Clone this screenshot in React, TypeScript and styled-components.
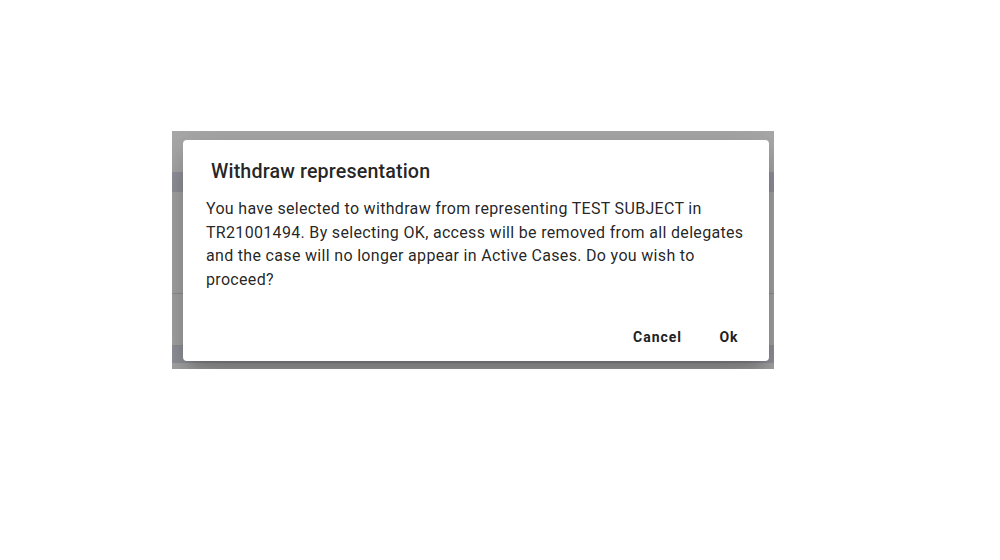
import React from "react";
import styled, { createGlobalStyle } from "styled-components";

const GlobalStyle = createGlobalStyle`
  html, body {
    margin: 0;
    padding: 0;
    background: #ffffff;
    font-family: Roboto, "Noto Sans", "Liberation Sans", sans-serif;
  }
`;

const Page = styled.div`
  padding: 131px 0 0 172px;
`;

const Region = styled.div`
  position: relative;
  width: 602px;
  height: 238px;
  overflow: hidden;
  background: #ffffff;
`;

const Underlay = styled.div`
  display: flex;
  flex-direction: column;
  padding-top: 41px;
`;

const HeaderBand = styled.div<{ $h: number }>`
  height: ${(p) => p.$h}px;
  background: #e2e2f0;
`;

const Row = styled.div<{ $h: number }>`
  height: ${(p) => p.$h}px;
  border-bottom: 1px solid #e0e0e0;
  box-sizing: border-box;
`;

const Backdrop = styled.div`
  position: absolute;
  inset: 0;
  background: rgba(0, 0, 0, 0.33);
  display: flex;
  align-items: flex-start;
  justify-content: flex-start;
  padding: 9px 0 0 11px;
  box-sizing: border-box;
`;

const Dialog = styled.div`
  width: 586px;
  background: #ffffff;
  border-radius: 4px;
  box-shadow:
    0px 11px 15px -7px rgba(0, 0, 0, 0.2),
    0px 24px 38px 3px rgba(0, 0, 0, 0.14),
    0px 9px 46px 8px rgba(0, 0, 0, 0.12);
  display: flex;
  flex-direction: column;
  color: rgba(0, 0, 0, 0.87);
`;

const Title = styled.h2`
  margin: 0;
  padding: 17px 24px 0 28px;
  font-size: 19.7px;
  font-weight: 500;
  line-height: 29px;
  letter-spacing: 0.0075em;
`;

const Content = styled.div`
  margin-top: 11px;
  padding: 0 24px 20px 23px;
  font-size: 16px;
  line-height: 23.5px;
  letter-spacing: 0.32px;
`;

const Actions = styled.div`
  display: flex;
  justify-content: flex-end;
  align-items: center;
  gap: 7px;
  padding: 8px 8px 6px;
`;

const TextButton = styled.button`
  min-width: 64px;
  padding: 6px 8px;
  border: none;
  background: transparent;
  border-radius: 4px;
  font-family: Roboto, "Noto Sans", "Liberation Sans", sans-serif;
  font-size: 14px;
  font-weight: 700;
  line-height: 24px;
  letter-spacing: 0.07em;
  color: #212121;
  cursor: pointer;
`;

export default function App() {
  return (
    <>
      <GlobalStyle />
      <Page>
        <Region>
          <Underlay>
            <HeaderBand $h={20} />
            <Row $h={102} />
            <Row $h={52} />
            <HeaderBand $h={17} />
          </Underlay>
          <Backdrop>
            <Dialog role="dialog">
              <Title>Withdraw representation</Title>
              <Content>
                You have selected to withdraw from representing TEST SUBJECT in
                TR21001494. By selecting OK, access will be removed from all
                delegates and the case will no longer appear in Active Cases. Do
                you wish to proceed?
              </Content>
              <Actions>
                <TextButton>Cancel</TextButton>
                <TextButton>Ok</TextButton>
              </Actions>
            </Dialog>
          </Backdrop>
        </Region>
      </Page>
    </>
  );
}
